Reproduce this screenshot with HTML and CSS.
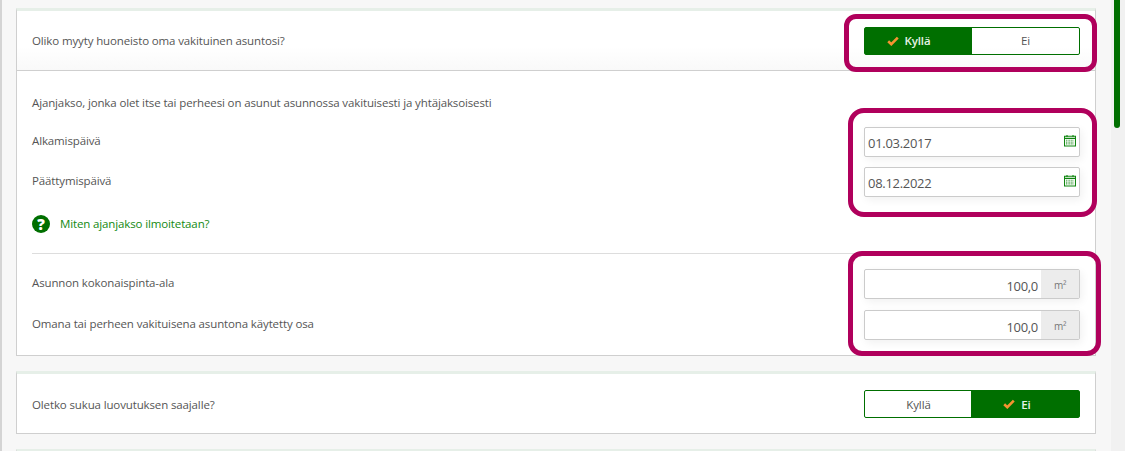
FILE: index.html
```html
<!DOCTYPE html>
<html lang="fi">
<head>
    <meta charset="UTF-8">
    <meta name="viewport" content="width=device-width, initial-scale=1.0">
    <title>Oma asunto</title>
    <link rel="stylesheet" href="styles.css">
</head>
<body>

    <div class="page">
        <main class="content">

            <section class="card">
                <div class="row question-row">
                    <span>Oliko myyty huoneisto oma vakituinen asuntosi?</span>
                    <div class="controls">
                        <div class="toggle">
                            <div class="toggle-option selected">
                                <svg class="check" viewBox="0 0 12 10"><path d="M1.2 5.2 4.3 8.2 10.8 1.6"/></svg>
                                Kyllä
                            </div>
                            <div class="toggle-option">Ei</div>
                        </div>
                        <div class="highlight highlight-toggle"></div>
                    </div>
                </div>

                <div class="details">
                    <p class="intro">Ajanjakso, jonka olet itse tai perheesi on asunut asunnossa vakituisesti ja yhtäjaksoisesti</p>

                    <div class="field-group">
                        <div class="labels dates">
                            <span>Alkamispäivä</span>
                            <span>Päättymispäivä</span>
                        </div>
                        <div class="controls stack">
                            <div class="input">
                                <span class="value">01.03.2017</span>
                                <svg class="calendar" viewBox="0 0 12 12"><path d="M.5 1.8h11v9.7H.5zM.5 3.9h11M3 .5v2M9 .5v2"/><path class="dots" d="M2 5.8h8M2 7.6h8M2 9.4h8"/></svg>
                            </div>
                            <div class="input">
                                <span class="value">08.12.2022</span>
                                <svg class="calendar" viewBox="0 0 12 12"><path d="M.5 1.8h11v9.7H.5zM.5 3.9h11M3 .5v2M9 .5v2"/><path class="dots" d="M2 5.8h8M2 7.6h8M2 9.4h8"/></svg>
                            </div>
                            <div class="highlight highlight-dates"></div>
                        </div>
                    </div>

                    <a class="help-link" href="#"><span class="help-icon">?</span>Miten ajanjakso ilmoitetaan?</a>

                    <hr class="divider">

                    <div class="field-group">
                        <div class="labels areas">
                            <span>Asunnon kokonaispinta-ala</span>
                            <span>Omana tai perheen vakituisena asuntona käytetty osa</span>
                        </div>
                        <div class="controls stack areas-stack">
                            <div class="input number">
                                <span class="value">100,0</span>
                                <span class="unit">m²</span>
                            </div>
                            <div class="input number">
                                <span class="value">100,0</span>
                                <span class="unit">m²</span>
                            </div>
                            <div class="highlight highlight-areas"></div>
                        </div>
                    </div>
                </div>
            </section>

            <section class="card">
                <div class="row question-row last">
                    <span>Oletko sukua luovutuksen saajalle?</span>
                    <div class="controls">
                        <div class="toggle">
                            <div class="toggle-option">Kyllä</div>
                            <div class="toggle-option selected">
                                <svg class="check" viewBox="0 0 12 10"><path d="M1.2 5.2 4.3 8.2 10.8 1.6"/></svg>
                                Ei
                            </div>
                        </div>
                    </div>
                </div>
            </section>

            <section class="card"></section>

        </main>

        <div class="scrollbar">
            <div class="thumb"></div>
        </div>
    </div>

</body>
</html>
```

FILE: styles.css
```css
* {
    box-sizing: border-box;
}
html, body {
    margin: 0;
    height: 451px;
    overflow: hidden;
}
body {
    font-family: "Open Sans", Arial, sans-serif;
    font-size: 11.5px;
    letter-spacing: -0.13px;
    color: #555;
    background-color: #f7f7f7;
}
.page {
    display: flex;
    height: 451px;
    overflow: hidden;
    border-left: 2px solid #d4d4d4;
}
.content {
    width: 1109px;
    padding: 8px 15px 0 14px;
    flex-shrink: 0;
}
.scrollbar {
    flex: 1;
    background-color: #f1f1f1;
    padding-left: 3px;
}
.thumb {
    width: 6px;
    height: 128px;
    background-color: #006f00;
    border-radius: 0 0 3px 3px;
}

.card {
    background-color: #fff;
    border: 1px solid #cfcfcf;
    border-top: 3px solid #e6efe8;
    margin-bottom: 15px;
}
.row {
    display: flex;
    justify-content: space-between;
    align-items: center;
    padding: 0 15px;
}
.question-row {
    height: 60px;
    border-bottom: 1px solid #cfcfcf;
    background: linear-gradient(#fff 60%, #f9f9f9);
}
.question-row.last {
    height: 59px;
    padding-top: 1px;
    border-bottom: none;
    background: #fff;
}

.controls {
    position: relative;
    width: 216px;
}
.stack {
    display: flex;
    flex-direction: column;
    gap: 10px;
}

.toggle {
    display: flex;
    height: 28px;
    border: 1px solid #006f00;
    border-radius: 2px;
}
.toggle-option {
    flex: 0 0 50%;
    display: flex;
    align-items: center;
    justify-content: center;
    gap: 6px;
}
.toggle-option.selected {
    background-color: #006f00;
    color: #e6f2e6;
    font-weight: 600;
    padding-right: 20px;
}
.toggle-option + .toggle-option.selected {
    flex-basis: calc(50% + 1px);
    margin-left: -1px;
    padding-right: 16px;
}
.check {
    width: 12px;
    height: 10px;
}
.check path {
    fill: none;
    stroke: #f59331;
    stroke-width: 2.6;
}

.details {
    padding: 23px 15px 15px;
}
.intro {
    margin: 0 0 15px;
    line-height: 18px;
}
.field-group {
    display: flex;
    justify-content: space-between;
}
.labels {
    display: flex;
    flex-direction: column;
    gap: 22px;
    line-height: 18px;
    padding-top: 5px;
}
.labels.areas {
    gap: 23px;
}

.input {
    display: flex;
    align-items: center;
    justify-content: space-between;
    height: 30px;
    background-color: #fff;
    border: 1px solid #cbcbcb;
    border-radius: 2px;
    box-shadow: 2px 3px 8px rgba(0, 0, 0, 0.06);
    padding: 2px 3px 0 3px;
    font-size: 13px;
    letter-spacing: -0.3px;
}
.calendar {
    width: 12px;
    height: 13px;
    margin-top: -6px;
}
.calendar path {
    fill: none;
    stroke: #0f850f;
    stroke-width: 1.1;
}
.calendar .dots {
    stroke-dasharray: 1 .6;
    stroke: #4ca64c;
}
.input.number {
    padding: 0;
}
.number .value {
    flex: 1;
    text-align: right;
    padding: 4px 3px 0 0;
}
.unit {
    width: 38px;
    height: 100%;
    padding-top: 1px;
    background-color: #ececec;
    font-size: 10px;
    color: #777;
    display: flex;
    align-items: center;
    justify-content: center;
}
.areas-stack {
    gap: 11px;
}

.help-link {
    display: flex;
    align-items: center;
    gap: 10px;
    color: #128a12;
    text-decoration: none;
    margin-top: 18px;
    line-height: 18px;
}
.help-icon {
    width: 18px;
    height: 18px;
    border-radius: 50%;
    background-color: #006f00;
    color: #fff;
    font-weight: 800;
    font-size: 15px;
    text-align: center;
}
.divider {
    border: none;
    border-top: 1px solid #ddd;
    margin: 20px 0 15px;
}

/* annotation frames drawn on top of the form */
.highlight {
    position: absolute;
    border: 5px solid #b0005c;
    pointer-events: none;
}
.highlight-toggle {
    top: -13px;
    bottom: -17px;
    left: -20px;
    right: -17px;
    border-radius: 12px;
}
.highlight-dates {
    top: -19px;
    bottom: -20px;
    left: -16px;
    right: -17px;
    border-radius: 16px;
}
.highlight-areas {
    top: -18px;
    bottom: -16px;
    left: -16px;
    right: -21px;
    border-radius: 14px;
}
```
